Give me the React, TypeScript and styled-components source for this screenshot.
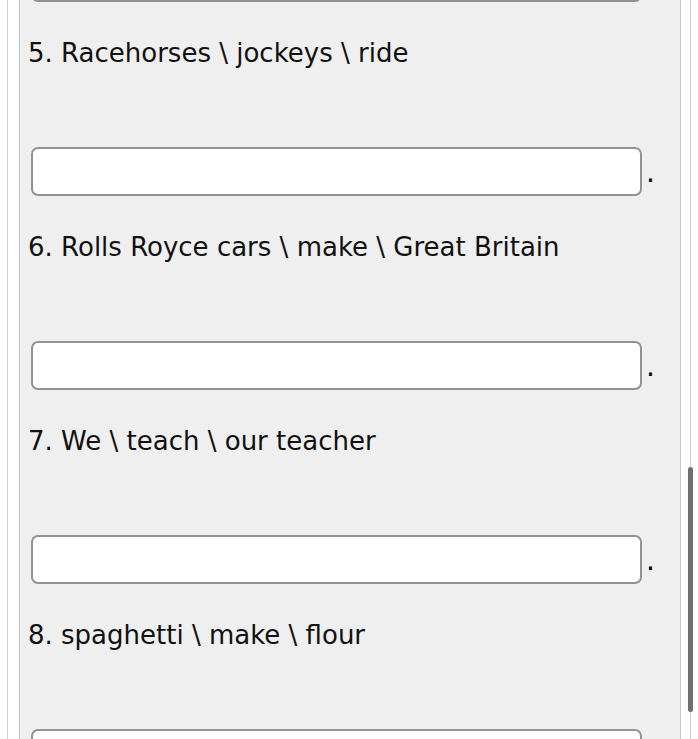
import React from "react";
import styled, { createGlobalStyle } from "styled-components";

const Global = createGlobalStyle`
  html, body { margin: 0; padding: 0; background: #ffffff; overflow: hidden; }
  body { font-family: "DejaVu Sans", Verdana, sans-serif; }
`;

const Viewport = styled.div`
  position: relative;
  width: 698px;
  height: 739px;
  overflow: hidden;
  background: #ffffff;
`;

const Outer = styled.div`
  margin-left: 7px;
  width: 684px;
  height: 739px;
  border-left: 1px solid #cfcfcf;
  border-right: 1px solid #cfcfcf;
  padding: 0 9px 0 11px;
  box-sizing: border-box;
`;

const Panel = styled.div`
  background: #efefef;
  border-left: 1px solid #c4c4c4;
  border-right: 1px solid #c4c4c4;
  height: 100%;
  padding: 0 0 0 8px;
  box-sizing: border-box;
  overflow: hidden;
`;

const Scrolled = styled.div`
  margin-top: -47px;
`;

const Item = styled.div`
  display: flex;
  flex-direction: column;
`;

const Label = styled.p`
  margin: 36px 0 0 0;
  font-size: 26px;
  line-height: 30px;
  color: #111111;
  white-space: nowrap;
`;

const AnswerRow = styled.div<{ $first?: boolean }>`
  display: flex;
  align-items: flex-end;
  margin-top: ${(p) => (p.$first ? "0" : "79px")};
  padding-left: 3px;
`;

const Field = styled.input`
  width: 611px;
  height: 49px;
  box-sizing: border-box;
  border: 2px solid #929292;
  border-radius: 7px;
  background: #ffffff;
  font-size: 20px;
  padding: 0 8px;
  outline: none;
`;

const Stop = styled.span`
  margin: 0 0 9px 4px;
  font-size: 28px;
  color: #000000;
  line-height: 1;
`;

const Scrollbar = styled.div`
  position: absolute;
  left: 688px;
  top: 467px;
  width: 5px;
  height: 245px;
  border-radius: 3px;
  background: #707070;
`;

const items = [
  "4.",
  "5. Racehorses \\ jockeys \\ ride",
  "6. Rolls Royce cars \\ make \\ Great Britain",
  "7. We \\ teach \\ our teacher",
  "8. spaghetti \\ make \\ flour",
];

export default function App() {
  return (
    <Viewport>
      <Global />
      <Outer>
        <Panel>
          <Scrolled>
            {items.map((t, i) => (
              <Item key={i}>
                {i > 0 && <Label>{t}</Label>}
                <AnswerRow $first={i === 0}>
                  <Field type="text" aria-label={t} />
                  <Stop>.</Stop>
                </AnswerRow>
              </Item>
            ))}
          </Scrolled>
        </Panel>
      </Outer>
      <Scrollbar />
    </Viewport>
  );
}
